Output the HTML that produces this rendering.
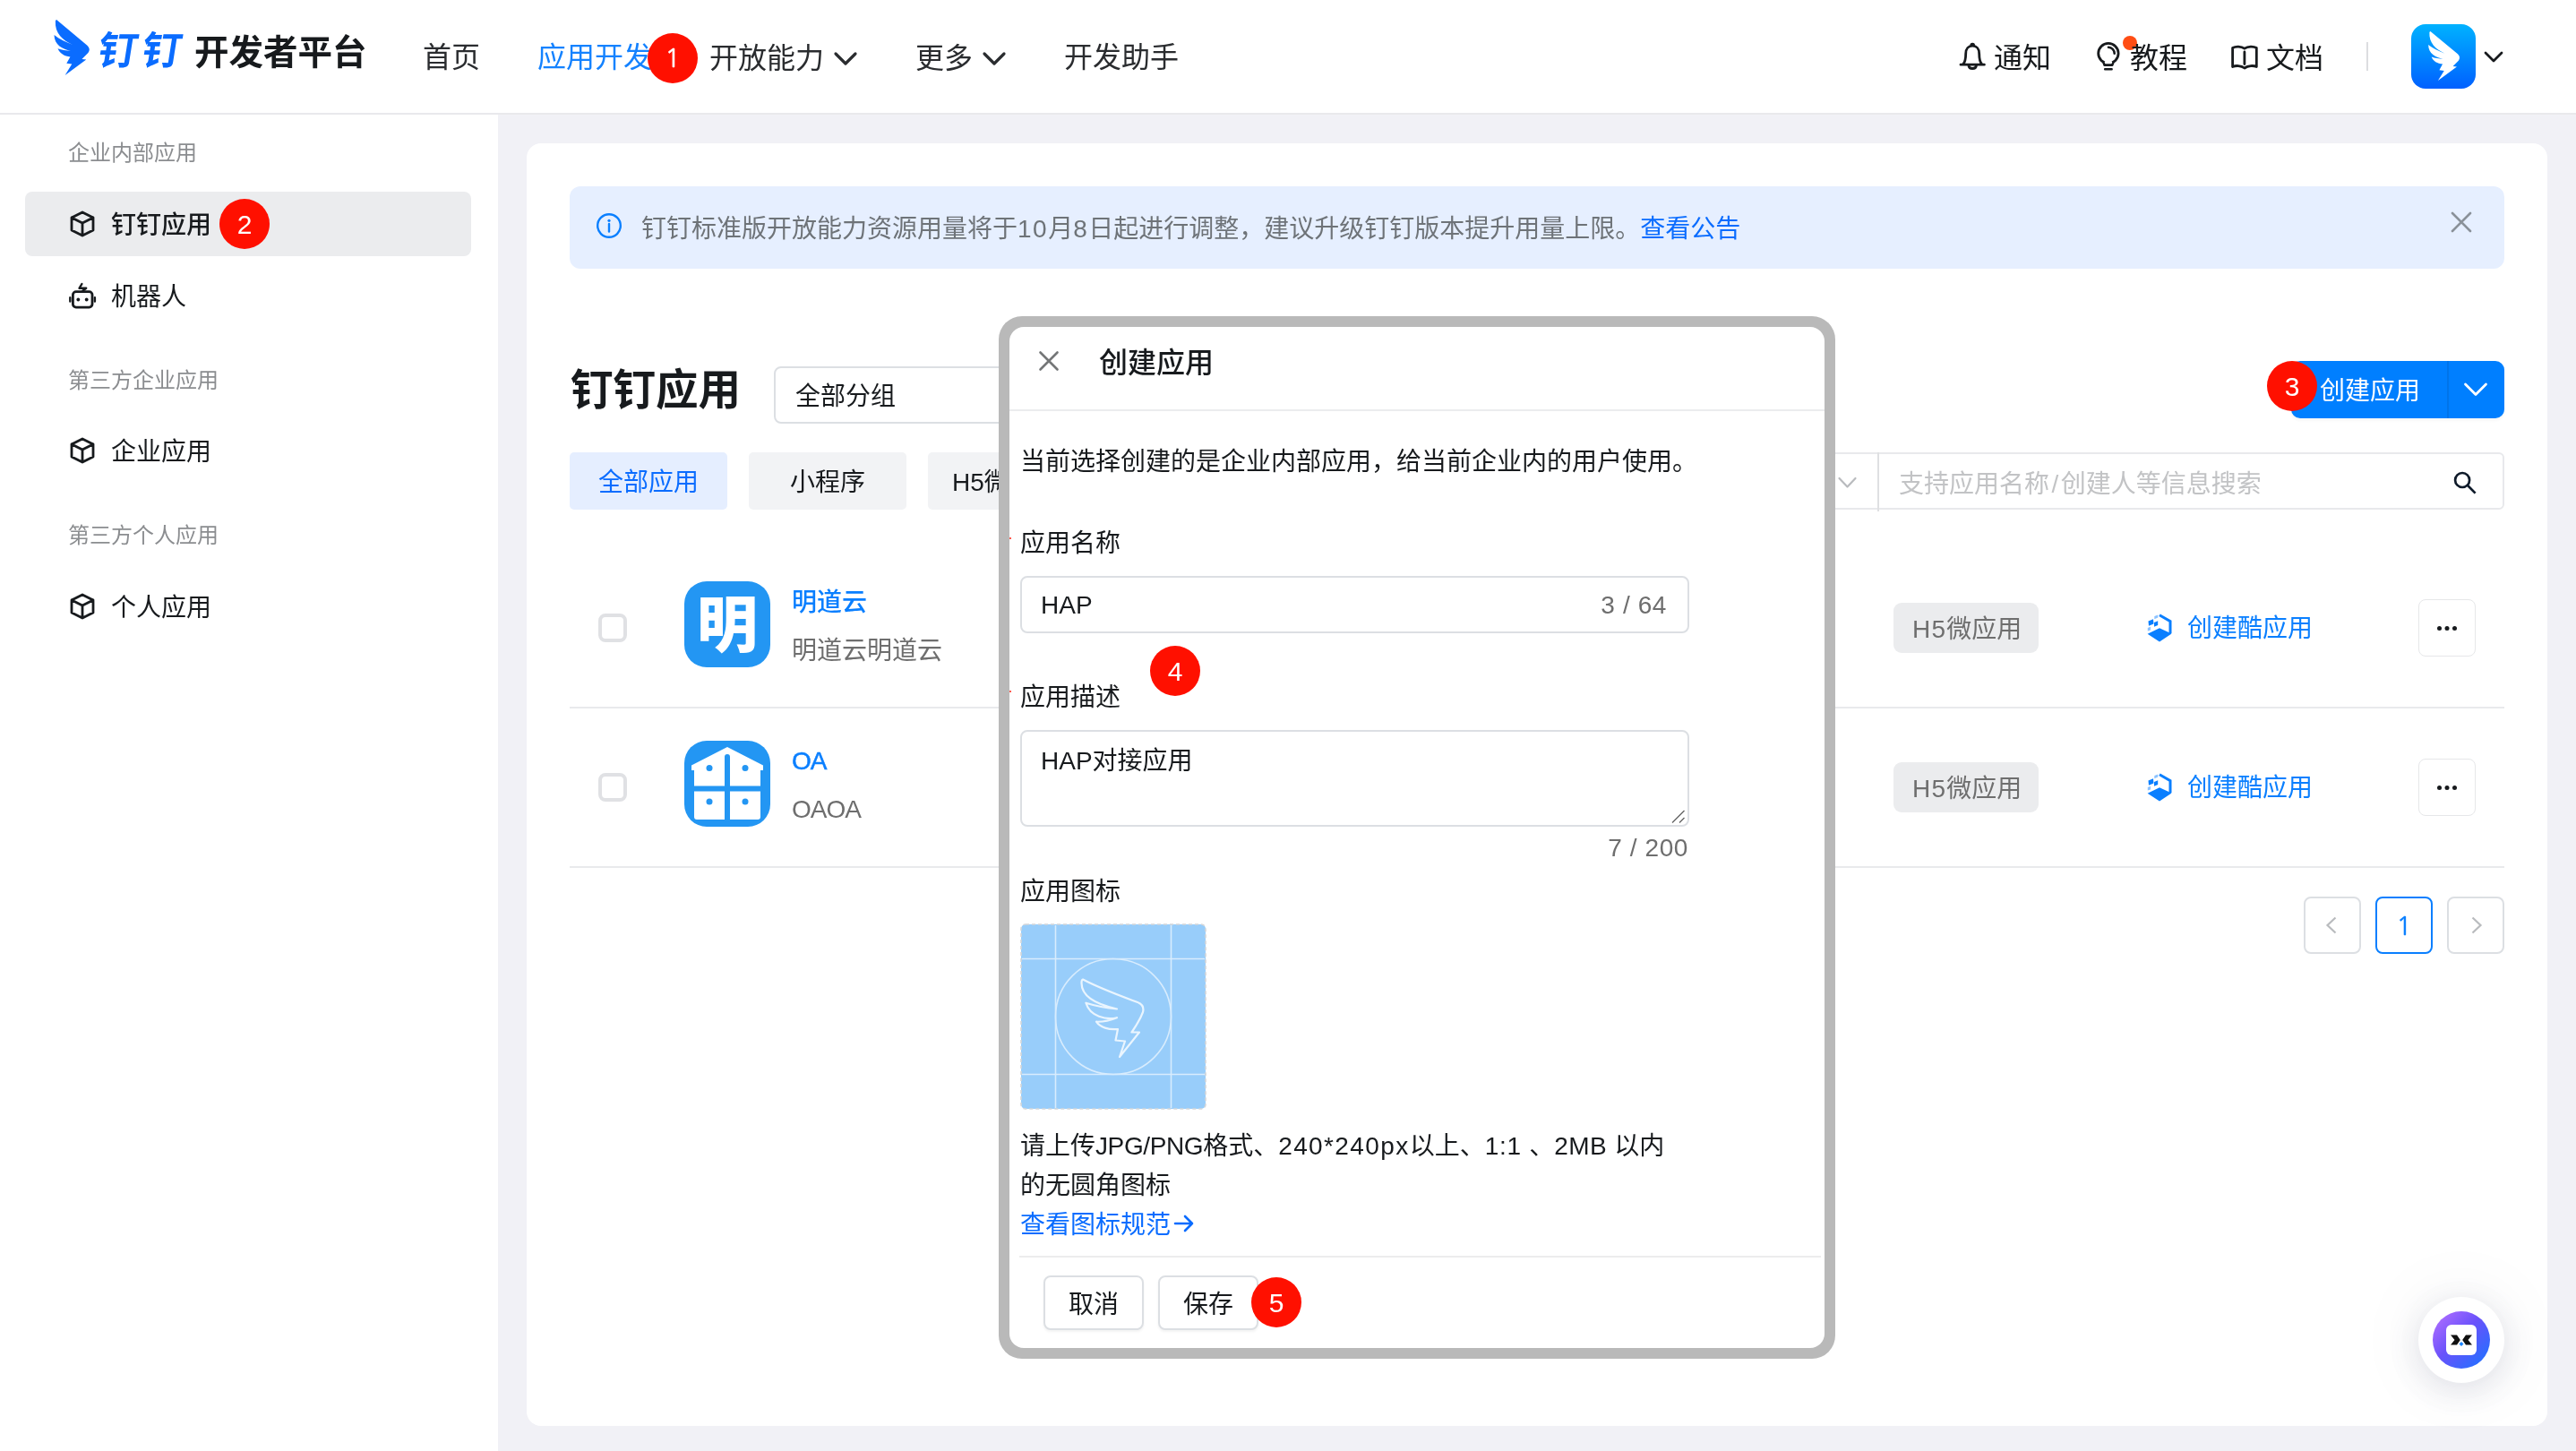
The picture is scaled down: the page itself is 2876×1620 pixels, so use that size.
<!DOCTYPE html>
<html lang="zh-CN">
<head>
<meta charset="utf-8">
<title>钉钉开发者平台</title>
<style>
*{box-sizing:border-box;margin:0;padding:0}
html,body{width:2876px;height:1620px;overflow:hidden;background:#f1f1f6}
body{position:relative;font-family:"Liberation Sans","Noto Sans CJK SC",sans-serif;color:#171a1d;font-size:28px}
#root{position:absolute;left:0;top:0;width:2876px;height:1620px;will-change:transform;transform:translateZ(0)}
.abs{position:absolute}
.t{position:absolute;white-space:nowrap;line-height:40px;height:40px;margin-top:2px}
.z{margin-top:0}
.ls{letter-spacing:.7px}
.l{margin-top:1px}
/* header */
#hdr{position:absolute;left:0;top:0;width:2876px;height:128px;background:#fff;border-bottom:2px solid #e9e9ec}
.nav{font-size:32px;color:#2a2c2f;margin-top:0}
.badge{position:absolute;width:56px;height:56px;border-radius:50%;background:#ff1000;color:#fff;font-size:30px;line-height:57px;text-align:center;font-family:"Liberation Sans",sans-serif}
.b1{font-family:"NanumGothic","Liberation Sans",sans-serif;font-size:29px;line-height:56px;-webkit-text-stroke:.5px #fff}
/* sidebar */
#side{position:absolute;left:0;top:128px;width:556px;height:1492px;background:#fff}
.sg{font-size:24px;color:#8b8d90;margin-top:1px}
.si{font-size:28px;color:#171a1d}
/* card */
#card{position:absolute;left:588px;top:160px;width:2256px;height:1432px;background:#fff;border-radius:16px}
</style>
</head>
<body>
<div id="root">

<!-- ================= HEADER ================= -->
<div id="hdr">
  <!-- logo wing -->
  <svg class="abs" style="left:60px;top:22px" width="42" height="63" viewBox="0 0 42 63"><path d="M3.100 0.100 L37.400 28.700 Q41.500 32.500 38.400 37 L31.400 44 L36.300 44.600 L12.600 62 L20.300 49.600 L14.300 48.800 L18.400 41.400 C12 41 6.500 37.500 4.500 32.300 C9 34 14 34.500 18.900 34.600 C10 33.500 0.500 28 0.500 17.100 C6 21.500 13 25 21.300 28 C10 23 1 15 1.900 1.400 Q2.200 0.300 3.100 0.100 Z" fill="#0a6cff"/></svg>
  <div class="t z" style="left:110px;top:34px;font-size:44px;line-height:46px;height:46px;color:#0a6cff;font-weight:700;letter-spacing:5px;transform:skewX(-9deg)">钉钉</div>
  <div class="t z" style="left:217px;top:36px;font-size:38.500px;line-height:46px;height:46px;color:#171a1d;font-weight:700">开发者平台</div>

  <div class="t nav" style="left:472px;top:44px">首页</div>
  <div class="t nav" style="left:600px;top:44px;color:#1482ff">应用开发</div>
  <div class="t nav" style="left:792px;top:45px">开放能力</div>
  <svg class="abs" style="left:930px;top:56px" width="28" height="20" viewBox="0 0 28 20"><path d="M3 4 L14 15 L25 4" fill="none" stroke="#2a2c2f" stroke-width="3.2" stroke-linecap="round" stroke-linejoin="round"/></svg>
  <div class="t nav" style="left:1022px;top:45px">更多</div>
  <svg class="abs" style="left:1096px;top:56px" width="28" height="20" viewBox="0 0 28 20"><path d="M3 4 L14 15 L25 4" fill="none" stroke="#2a2c2f" stroke-width="3.2" stroke-linecap="round" stroke-linejoin="round"/></svg>
  <div class="t nav" style="left:1188px;top:44px">开发助手</div>
  <div class="badge b1" style="left:723px;top:37px">1</div>

  <!-- right side -->
  <svg class="abs" style="left:2186px;top:46px" width="32" height="36" viewBox="0 0 32 36"><path d="M3 26.200 L29.400 26.200 M5.500 26 C8.500 23 8.700 19 8.700 14 C8.700 8 12 5.200 16.200 5.200 C20.400 5.200 23.700 8 23.700 14 C23.700 19 23.900 23 26.900 26 M14.700 4.700 C14.700 2.500 17.700 2.500 17.700 4.700 M12 27.500 C12.500 31.500 19.900 31.500 20.400 27.500" fill="none" stroke="#171a1d" stroke-width="2.800" stroke-linejoin="round" stroke-linecap="round"/></svg>
  <div class="t nav" style="left:2226px;top:45px;color:#171a1d">通知</div>
  <svg class="abs" style="left:2338px;top:44px" width="32" height="38" viewBox="0 0 32 38"><circle cx="15.900" cy="15.600" r="11.200" fill="#fff" stroke="#171a1d" stroke-width="2.800"/><path d="M10.600 25.500 L11.600 28.700 L20.200 28.700 L21.200 25.500" fill="#fff" stroke="#171a1d" stroke-width="2.800" stroke-linejoin="round" stroke-linecap="round"/><path d="M11.500 24.800 L20.300 24.800 L19.500 27 L12.300 27 Z" fill="#fff"/><path d="M12.200 33.200 L19.600 33.200 M16 8.800 A7 7 0 0 1 22.700 15.800" fill="none" stroke="#171a1d" stroke-width="2.600" stroke-linecap="round"/></svg>
  <div class="abs" style="left:2370px;top:40px;width:16px;height:16px;border-radius:50%;background:#ff4d14"></div>
  <div class="t nav" style="left:2378px;top:45px;color:#171a1d">教程</div>
  <svg class="abs" style="left:2488px;top:48px" width="36" height="32" viewBox="0 0 36 32"><path d="M4.600 5.500 C8 3.500 14 3.500 17.900 6.200 C21.800 3.500 28 3.500 31.300 5.500 L31.300 26.500 C28 25 22 25 17.900 28 C14 25 8 25 4.600 26.500 Z M17.900 10 L17.900 23.500" fill="none" stroke="#171a1d" stroke-width="2.800" stroke-linejoin="round" stroke-linecap="round"/></svg>
  <div class="t nav" style="left:2530px;top:45px;color:#171a1d">文档</div>
  <div class="abs" style="left:2642px;top:47px;width:2px;height:32px;background:#dcdde0"></div>
  <!-- avatar -->
  <svg class="abs" style="left:2692px;top:27px" width="72" height="72" viewBox="0 0 72 72">
    <defs><linearGradient id="avg" x1="0" y1="0" x2="0" y2="1"><stop offset="0" stop-color="#00b2ff"/><stop offset="1" stop-color="#0060ff"/></linearGradient></defs>
    <rect width="72" height="72" rx="16" fill="url(#avg)"/>
    <path transform="translate(18.700 7.800) scale(0.889)" d="M3.100 0.100 L37.400 28.700 Q41.500 32.500 38.400 37 L31.400 44 L36.300 44.600 L12.600 62 L20.300 49.600 L14.300 48.800 L18.400 41.400 C12 41 6.500 37.500 4.500 32.300 C9 34 14 34.500 18.900 34.600 C10 33.500 0.500 28 0.500 17.100 C6 21.500 13 25 21.300 28 C10 23 1 15 1.900 1.400 Q2.200 0.300 3.100 0.100 Z" fill="#fff"/>
  </svg>
  <svg class="abs" style="left:2772px;top:55px" width="24" height="18" viewBox="0 0 24 18"><path d="M3 4 L12 13 L21 4" fill="none" stroke="#171a1d" stroke-width="2.800" stroke-linecap="round" stroke-linejoin="round"/></svg>
</div>

<!-- ================= SIDEBAR ================= -->
<div id="side"></div>
<div class="t sg" style="left:76px;top:150px">企业内部应用</div>
<div class="abs" style="left:28px;top:214px;width:498px;height:72px;border-radius:8px;background:#ebecee"></div>
<div class="t si" style="left:124px;top:230px;font-weight:500">钉钉应用</div>
<div class="badge" style="left:245px;top:222px">2</div>
<div class="t si" style="left:124px;top:310px">机器人</div>
<div class="t sg" style="left:76px;top:404px">第三方企业应用</div>
<div class="t si" style="left:124px;top:483px">企业应用</div>
<div class="t sg" style="left:76px;top:577px">第三方个人应用</div>
<div class="t si" style="left:124px;top:657px">个人应用</div>

<svg class="abs" style="left:76px;top:234px" width="32" height="32" viewBox="0 0 32 32"><path d="M16 3 L28 9 L28 23 L16 29 L4 23 L4 9 Z M4 9 L16 15 L28 9 M16 15 L16 29" fill="none" stroke="#171a1d" stroke-width="2.800" stroke-linejoin="round" stroke-linecap="round"/></svg>
<svg class="abs" style="left:75px;top:314px" width="34" height="34" viewBox="0 0 34 34"><path d="M16.400 3 L13.500 7.800 L21.200 7.800 L17.300 10.700" fill="none" stroke="#171a1d" stroke-width="2.400" stroke-linejoin="round" stroke-linecap="round"/><rect x="6.400" y="11.600" width="21.600" height="17.500" rx="3.500" fill="none" stroke="#171a1d" stroke-width="2.800"/><path d="M3.300 18.200 L3.300 22.600 M30.900 18.200 L30.900 22.600" stroke="#171a1d" stroke-width="2.400" stroke-linecap="round"/><circle cx="12.300" cy="20.500" r="1.900" fill="#171a1d"/><circle cx="21.700" cy="20.500" r="1.900" fill="#171a1d"/></svg>
<svg class="abs" style="left:76px;top:487px" width="32" height="32" viewBox="0 0 32 32"><path d="M16 3 L28 9 L28 23 L16 29 L4 23 L4 9 Z M4 9 L16 15 L28 9 M16 15 L16 29" fill="none" stroke="#171a1d" stroke-width="2.800" stroke-linejoin="round" stroke-linecap="round"/></svg>
<svg class="abs" style="left:76px;top:661px" width="32" height="32" viewBox="0 0 32 32"><path d="M16 3 L28 9 L28 23 L16 29 L4 23 L4 9 Z M4 9 L16 15 L28 9 M16 15 L16 29" fill="none" stroke="#171a1d" stroke-width="2.800" stroke-linejoin="round" stroke-linecap="round"/></svg>
<!-- ================= CARD ================= -->
<div id="card"></div>
<!-- alert -->
<div class="abs" style="left:636px;top:208px;width:2160px;height:92px;border-radius:12px;background:#e6efff"></div>
<svg class="abs" style="left:665px;top:237px" width="30" height="30" viewBox="0 0 30 30"><circle cx="15" cy="15" r="12.800" fill="none" stroke="#0a7fff" stroke-width="2.400"/><circle cx="15" cy="9.300" r="1.600" fill="#0a7fff"/><path d="M15 13 L15 21.500" stroke="#0a7fff" stroke-width="2.400" stroke-linecap="round"/></svg>
<div class="t" style="left:716px;top:234px;color:#6e7378">钉钉标准版开放能力资源用量将于<span style="letter-spacing:1.5px">10</span>月<span style="letter-spacing:1.5px">8</span>日起进行调整，建议升级钉钉版本提升用量上限。<span style="color:#0a6cff">查看公告</span></div>
<svg class="abs" style="left:2734px;top:234px" width="28" height="28" viewBox="0 0 28 28"><path d="M4 4 L24 24 M24 4 L4 24" stroke="#8a9199" stroke-width="2.600" stroke-linecap="round"/></svg>

<!-- title row -->
<div class="t z" style="left:637px;top:403px;font-size:47.500px;line-height:66px;height:66px;font-weight:700">钉钉应用</div>
<div class="abs" style="left:864px;top:409px;width:400px;height:64px;border:2px solid #dcdfe3;border-radius:8px;background:#fff"></div>
<div class="t" style="left:888px;top:421px">全部分组</div>

<!-- create button -->
<div class="abs" style="left:2558px;top:403px;width:238px;height:64px;border-radius:10px;background:#007fff;box-shadow:0 3px 3px rgba(0,0,0,.03)"></div>
<div class="abs" style="left:2732px;top:403px;width:2px;height:64px;background:#0074ea"></div>
<div class="t" style="left:2590px;top:415px;color:#fff">创建应用</div>
<svg class="abs" style="left:2749px;top:424px" width="30" height="22" viewBox="0 0 30 22"><path d="M3.500 5 L15 16.500 L26.500 5" fill="none" stroke="#fff" stroke-width="2.800" stroke-linecap="round" stroke-linejoin="round"/></svg>
<div class="badge" style="left:2531px;top:403px">3</div>

<!-- tabs -->
<div class="abs" style="left:636px;top:505px;width:176px;height:64px;border-radius:5px;background:#e5eeff"></div>
<div class="t" style="left:668px;top:517px;color:#0a6cff">全部应用</div>
<div class="abs" style="left:836px;top:505px;width:176px;height:64px;border-radius:5px;background:#f2f3f5"></div>
<div class="t" style="left:882px;top:517px">小程序</div>
<div class="abs" style="left:1036px;top:505px;width:176px;height:64px;border-radius:5px;background:#f2f3f5"></div>
<div class="t" style="left:1063px;top:517px">H5微应用</div>

<!-- search -->
<div class="abs" style="left:1900px;top:505px;width:896px;height:64px;border:2px solid #e8e9ec;border-radius:6px;background:#fff"></div>
<div class="abs" style="left:2096px;top:505px;width:2px;height:66px;background:#dfe0e2"></div>
<svg class="abs" style="left:2050px;top:530px" width="26" height="20" viewBox="0 0 26 20"><path d="M3.500 4 L12.500 13.500 L21.500 4" fill="none" stroke="#b9bbbe" stroke-width="2.200" stroke-linecap="round" stroke-linejoin="round"/></svg>
<div class="t" style="left:2120px;top:519px;color:#c2c3c5">支持应用名称<span style="letter-spacing:2.500px;margin-left:2.500px">/</span>创建人等信息搜索</div>
<svg class="abs" style="left:2736px;top:522.500px" width="32" height="32" viewBox="0 0 32 32"><circle cx="13.100" cy="13" r="8" fill="none" stroke="#0f1b2a" stroke-width="2.700"/><path d="M18.800 18.800 L27.600 27.600" stroke="#0f1b2a" stroke-width="2.700"/></svg>

<!-- ROWS -->
<div class="abs" style="left:668px;top:685px;width:32px;height:32px;border:4px solid #e0e1e4;border-radius:8px;background:#fff"></div>
<svg class="abs" style="left:764px;top:649px" width="96" height="96" viewBox="0 0 96 96"><rect width="96" height="96" rx="25" fill="#2396f3"/><text x="48" y="73" text-anchor="middle" font-family="Noto Sans CJK SC, sans-serif" font-weight="900" font-size="68" fill="#fff">明</text></svg>
<div class="t" style="left:884px;top:651px;color:#0a7fff;font-weight:500">明道云</div>
<div class="t" style="left:884px;top:705px;color:#6e6e6e">明道云明道云</div>
<div class="abs" style="left:2114px;top:673px;width:162px;height:56px;border-radius:9px;background:#ebecee"></div>
<div class="t" style="left:2135px;top:681px;color:#6e6e6e"><span style="letter-spacing:1.2px">H5</span>微应用</div>
<svg class="abs" style="left:2397px;top:684.5px" width="29" height="33" viewBox="0 0 29 33"><path d="M14 1.800 L26 8.600 L26 22" stroke="#0a7fff" stroke-width="3" fill="none"/><path d="M14 16.300 L27.500 22.600 L14 31.600 L0.600 22.800 Z" fill="#0a7fff"/><path d="M1.500 8.500 L7 6.200 L7.500 11.500 L2 13.800 Z M8 10 L12.200 8.200 L12.200 13 L8 14.800 Z" fill="#0a7fff"/><path d="M8.300 3 L12.300 1.400 L12.300 4.600 L8.300 6.200 Z M0.800 16 L4 14.800 L4 18.400 L0.800 19.600 Z" fill="#8cc2ff"/></svg>
<div class="t" style="left:2442px;top:680px;color:#0a7fff">创建酷应用</div>
<div class="abs" style="left:2700px;top:669px;width:64px;height:64px;border:1px solid #e6e7e9;border-radius:8px;background:#fff"></div>
<div class="abs" style="left:2721px;top:699px;width:5px;height:5px;border-radius:50%;background:#171a1d;box-shadow:8.500px 0 0 #171a1d,17px 0 0 #171a1d"></div>
<div class="abs" style="left:636px;top:789px;width:2160px;height:2px;background:#e9eaec"></div>
<div class="abs" style="left:668px;top:863px;width:32px;height:32px;border:4px solid #e0e1e4;border-radius:8px;background:#fff"></div>
<svg class="abs" style="left:764px;top:827px" width="96" height="96" viewBox="0 0 96 96"><rect width="96" height="96" rx="25" fill="#2396f3"/><path d="M48 7 L88 27.500 L88 33 L85 33 L85 85 Q85 88 82 88 L14 88 Q11 88 11 85 L11 33 L8 33 L8 27.500 Z" fill="#fff"/><path d="M48 18 L48 88 M11 53.500 L85 53.500" stroke="#2396f3" stroke-width="6" stroke-linecap="round"/><circle cx="28" cy="30.500" r="3.500" fill="#2396f3"/><circle cx="68" cy="30.500" r="3.500" fill="#2396f3"/><circle cx="28" cy="68" r="3.500" fill="#2396f3"/><circle cx="68" cy="68" r="3.500" fill="#2396f3"/></svg>
<div class="t" style="left:884px;top:829px;color:#0a7fff;font-weight:500;letter-spacing:-1px;margin-top:1px;-webkit-text-stroke:.5px #0a7fff">OA</div>
<div class="t" style="left:884px;top:883px;color:#6e6e6e;letter-spacing:-1px;margin-top:1px">OAOA</div>
<div class="abs" style="left:2114px;top:851px;width:162px;height:56px;border-radius:9px;background:#ebecee"></div>
<div class="t" style="left:2135px;top:859px;color:#6e6e6e"><span style="letter-spacing:1.2px">H5</span>微应用</div>
<svg class="abs" style="left:2397px;top:862.5px" width="29" height="33" viewBox="0 0 29 33"><path d="M14 1.800 L26 8.600 L26 22" stroke="#0a7fff" stroke-width="3" fill="none"/><path d="M14 16.300 L27.500 22.600 L14 31.600 L0.600 22.800 Z" fill="#0a7fff"/><path d="M1.500 8.500 L7 6.200 L7.500 11.500 L2 13.800 Z M8 10 L12.200 8.200 L12.200 13 L8 14.800 Z" fill="#0a7fff"/><path d="M8.300 3 L12.300 1.400 L12.300 4.600 L8.300 6.200 Z M0.800 16 L4 14.800 L4 18.400 L0.800 19.600 Z" fill="#8cc2ff"/></svg>
<div class="t" style="left:2442px;top:858px;color:#0a7fff">创建酷应用</div>
<div class="abs" style="left:2700px;top:847px;width:64px;height:64px;border:1px solid #e6e7e9;border-radius:8px;background:#fff"></div>
<div class="abs" style="left:2721px;top:877px;width:5px;height:5px;border-radius:50%;background:#171a1d;box-shadow:8.500px 0 0 #171a1d,17px 0 0 #171a1d"></div>
<div class="abs" style="left:636px;top:967px;width:2160px;height:2px;background:#e9eaec"></div>

<!-- pagination -->
<div class="abs" style="left:2572px;top:1001px;width:64px;height:64px;border:2px solid #dcdfe3;border-radius:8px;background:#fff"></div>
<svg class="abs" style="left:2592px;top:1021px" width="24" height="24" viewBox="0 0 24 24"><path d="M15.500 3.500 L6.500 12 L15.500 20.500" fill="none" stroke="#b9bbbe" stroke-width="2.200"/></svg>
<div class="abs" style="left:2652px;top:1001px;width:64px;height:64px;border:2px solid #0a7fff;border-radius:8px;background:#fff"></div>
<div class="t" style="left:2652px;top:1013px;width:64px;text-align:center;color:#0a7fff;font-weight:500;margin-top:1px;font-size:29px;font-family:'NanumGothic','Liberation Sans',sans-serif;-webkit-text-stroke:.4px #0a7fff">1</div>
<div class="abs" style="left:2732px;top:1001px;width:64px;height:64px;border:2px solid #dcdfe3;border-radius:8px;background:#fff"></div>
<svg class="abs" style="left:2752px;top:1021px" width="24" height="24" viewBox="0 0 24 24"><path d="M8.500 3.500 L17.500 12 L8.500 20.500" fill="none" stroke="#b9bbbe" stroke-width="2.200"/></svg>

<!-- floating helper -->
<div class="abs" style="left:2700px;top:1448px;width:96px;height:96px;border-radius:50%;background:#fff;box-shadow:0 8px 40px rgba(60,70,110,.16),0 0 90px rgba(60,70,110,.06)"></div>
<svg class="abs" style="left:2716px;top:1464px" width="64" height="64" viewBox="0 0 64 64"><defs><linearGradient id="fg" x1="0.100" y1="0.100" x2="0.900" y2="0.900"><stop offset="0" stop-color="#a96bff"/><stop offset="0.450" stop-color="#6a52fb"/><stop offset="1" stop-color="#256fff"/></linearGradient></defs><circle cx="32" cy="32" r="32" fill="url(#fg)"/><rect x="15" y="15" width="34" height="34" rx="6" fill="#fff"/><path d="M20 26.500 L27 26.500 L30.800 32 L27 37.500 L20 37.500 L24.500 32 Z M44 26.500 L37 26.500 L33.200 32 L37 37.500 L44 37.500 L39.500 32 Z" fill="#111"/><path d="M32 34 L34.500 36.500 L32 39 L29.500 36.500 Z" fill="#1a86ff"/></svg>

<!-- ================= MODAL ================= -->
<div class="abs" style="left:1115px;top:353px;width:934px;height:1164px;border-radius:26px;background:#b9b9b9"></div>
<div class="abs" style="left:1127px;top:365px;width:910px;height:1140px;border-radius:16px;background:#fff"></div>
<svg class="abs" style="left:1157px;top:389px" width="28" height="28" viewBox="0 0 28 28"><path d="M4.500 4.500 L23.500 23.500 M23.500 4.500 L4.500 23.500" stroke="#747677" stroke-width="2.600" stroke-linecap="round"/></svg>
<div class="t" style="left:1227px;top:380px;font-size:32px;line-height:46px;height:46px;font-weight:500">创建应用</div>
<div class="abs" style="left:1127px;top:457px;width:910px;height:2px;background:#ebecee"></div>
<div class="t" style="left:1139px;top:494px">当前选择创建的是企业内部应用，给当前企业内的用户使用。</div>

<div class="abs" style="left:1127px;top:600px;width:2px;height:2px;background:#ff5a4f"></div>
<div class="t" style="left:1139px;top:585px">应用名称</div>
<div class="abs" style="left:1139px;top:643px;width:747px;height:64px;border:2px solid #dcdfe3;border-radius:8px;background:#fff"></div>
<div class="t l" style="left:1162px;top:655px">HAP</div>
<div class="t l" style="left:1686px;top:655px;width:175px;text-align:right;color:#6e6e6e;letter-spacing:.6px">3 / 64</div>

<div class="abs" style="left:1127px;top:771px;width:2px;height:2px;background:#ff5a4f"></div>
<div class="t" style="left:1139px;top:757px">应用描述</div>
<div class="badge" style="left:1284px;top:721px">4</div>
<div class="abs" style="left:1139px;top:815px;width:747px;height:108px;border:2px solid #dcdfe3;border-radius:8px;background:#fff"></div>
<div class="t" style="left:1162px;top:828px">HAP对接应用</div>
<svg class="abs" style="left:1864px;top:902px" width="18" height="18" viewBox="0 0 18 18"><path d="M3 16.500 L16.500 3 M11 16.500 L16.500 11" stroke="#666" stroke-width="1.400"/></svg>
<div class="t l" style="left:1686px;top:926px;width:199px;text-align:right;color:#6e6e6e;letter-spacing:.6px">7 / 200</div>

<div class="t" style="left:1139px;top:974px">应用图标</div>
<!-- icon placeholder -->
<svg class="abs" style="left:1139px;top:1031px" width="208" height="208" viewBox="0 0 208 208">
  <rect x="1" y="1" width="206" height="206" rx="5" fill="#98cdfa" stroke="#d4d6d9" stroke-width="1.600" stroke-dasharray="4 3"/>
  <g stroke="#d8ecfd" stroke-width="1.600" fill="none">
    <path d="M39.500 2 L39.500 206 M168.500 2 L168.500 206 M2 39.500 L206 39.500 M2 168.500 L206 168.500"/>
    <circle cx="104" cy="104" r="64.500"/>
  </g>
  <path d="M70 62.500 C90 73 115 82 131 88 Q139 91 137 99 C134 107 129 115 124.500 121.500 L133 121.500 L111 149 L117 131.500 L106.500 130.500 L109 118 C99 119 89 116 85 109.700 C92 110 101 108 108 105.200 C96 108 78 104 73.400 88.700 C84 92 97 94.500 108 95.500 C92 92 68 84 68.500 66 Q68.500 63 70 62.500 Z" fill="none" stroke="#eaf5fe" stroke-width="2.200" stroke-linejoin="round"/>
</svg>
<div class="t" style="left:1139px;top:1256px;line-height:44px;height:auto;white-space:nowrap;width:760px">请上传<span style="letter-spacing:-.4px">JPG/PNG</span>格式、<span style="letter-spacing:1.4px">240*240px</span>以上、<span class="ls">1:1 </span>、<span style="letter-spacing:.4px">2MB </span>以内<br>的无圆角图标</div>
<div class="t" style="left:1139px;top:1344px;line-height:44px;height:44px;color:#0a6cff">查看图标规范</div>
<svg class="abs" style="left:1308px;top:1352px" width="28" height="28" viewBox="0 0 28 28"><path d="M4 14 L23 14 M15 6 L23 14 L15 22" fill="none" stroke="#0a6cff" stroke-width="2.600" stroke-linecap="round" stroke-linejoin="round"/></svg>

<div class="abs" style="left:1138px;top:1402px;width:895px;height:2px;background:#ececed"></div>
<div class="abs" style="left:1165px;top:1424px;width:112px;height:61px;border:2px solid #dcdfe3;border-radius:8px;background:#fff;box-shadow:0 2px 3px rgba(0,0,0,.05)"></div>
<div class="t" style="left:1165px;top:1435px;width:112px;text-align:center">取消</div>
<div class="abs" style="left:1293px;top:1424px;width:112px;height:61px;border:2px solid #dcdfe3;border-radius:8px;background:#fff;box-shadow:0 2px 3px rgba(0,0,0,.05)"></div>
<div class="t" style="left:1293px;top:1435px;width:112px;text-align:center">保存</div>
<div class="badge" style="left:1397px;top:1426px">5</div>

</div>
</body>
</html>
